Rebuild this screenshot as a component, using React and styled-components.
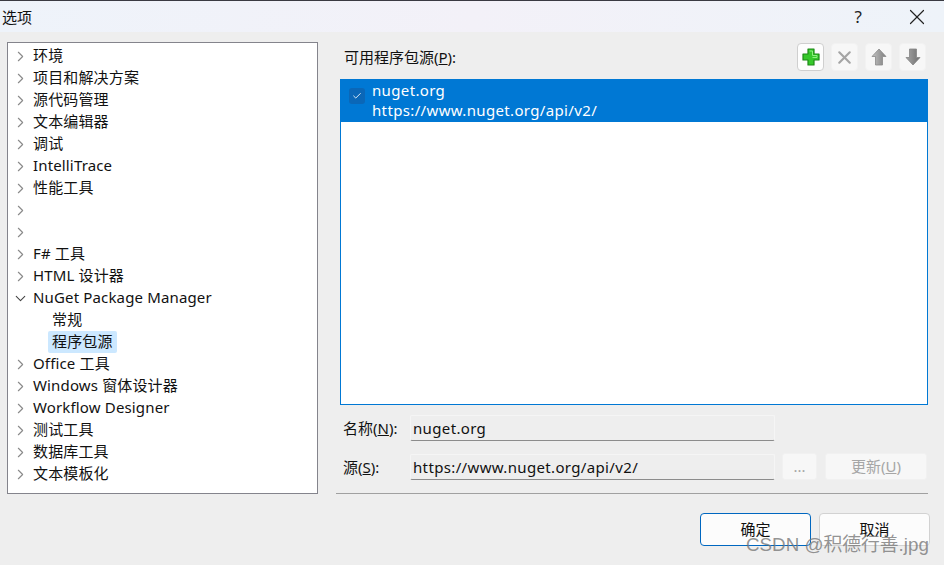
import React from "react";
import styled, { createGlobalStyle } from "styled-components";
import { ChevronRight, ChevronDown, X, Check } from "lucide-react";

const Global = createGlobalStyle`
  html, body { margin: 0; padding: 0; background: #eeeeee; }
  body { font-family: "Noto Sans", "Noto Sans CJK SC", sans-serif; }
`;

const treeItems = [
  { label: "环境" },
  { label: "项目和解决方案" },
  { label: "源代码管理" },
  { label: "文本编辑器" },
  { label: "调试" },
  { label: "IntelliTrace" },
  { label: "性能工具" },
  { label: "" },
  { label: "" },
  { label: "F# 工具" },
  { label: "HTML 设计器" },
  { label: "NuGet Package Manager", open: true },
  { label: "常规", child: true },
  { label: "程序包源", child: true, selected: true },
  { label: "Office 工具" },
  { label: "Windows 窗体设计器" },
  { label: "Workflow Designer" },
  { label: "测试工具" },
  { label: "数据库工具" },
  { label: "文本模板化" },
];

const App = () => (
  <Dialog>
    <Global />
    <TitleBar>
      <Title>选项</Title>
      <TitleActions>
        <HelpMark>?</HelpMark>
        <X size={26} strokeWidth={1.1} color="#222" />
      </TitleActions>
    </TitleBar>
    <Body>
      <Tree>
        {treeItems.map((item, idx) => (
          <TreeRow key={idx} $child={item.child}>
            {!item.child && (
              <Caret>
                {item.open ? (
                  <ChevronDown size={17} strokeWidth={1.5} color="#444" />
                ) : (
                  <ChevronRight size={17} strokeWidth={1.6} color="#8a8a8a" />
                )}
              </Caret>
            )}
            <TreeLabel $selected={item.selected}>{item.label}</TreeLabel>
          </TreeRow>
        ))}
      </Tree>
      <Panel>
        <PanelHead>
          <Label>可用程序包源(<u>P</u>):</Label>
          <Tools>
            <ToolButton $active>
              <svg width="20" height="20" viewBox="0 0 20 20">
                <path d="M7 2h6v5h5v6h-5v5H7v-5H2V7h5z" fill="#35c82a" stroke="#1d8a16" strokeWidth="1.2" strokeLinejoin="round" />
                <path d="M8.5 4h3v4.5H16v2h-4.5" fill="none" stroke="#8df07f" strokeWidth="1" />
              </svg>
            </ToolButton>
            <ToolButton>
              <X size={21} strokeWidth={2.4} color="#a4a4a4" />
            </ToolButton>
            <ToolButton>
              <svg width="18" height="20" viewBox="0 0 18 20">
                <defs>
                  <linearGradient id="up" x1="0" y1="0" x2="1" y2="0">
                    <stop offset="0" stopColor="#c4c4c4" />
                    <stop offset="1" stopColor="#7d7d7d" />
                  </linearGradient>
                </defs>
                <path d="M9 2l7 7.5h-3.5V18h-7V9.5H2z" fill="url(#up)" stroke="#8a8a8a" strokeWidth=".8" />
              </svg>
            </ToolButton>
            <ToolButton>
              <svg width="18" height="20" viewBox="0 0 18 20">
                <defs>
                  <linearGradient id="down" x1="0" y1="0" x2="1" y2="0">
                    <stop offset="0" stopColor="#a5a5a5" />
                    <stop offset="1" stopColor="#6f6f6f" />
                  </linearGradient>
                </defs>
                <path d="M5.5 2h7v8.5H16L9 18l-7-7.5h3.5z" fill="url(#down)" stroke="#858585" strokeWidth=".8" />
              </svg>
            </ToolButton>
          </Tools>
        </PanelHead>
        <SourceList>
          <SourceRow>
            <CheckBox>
              <Check size={10} strokeWidth={2} color="#fff" />
            </CheckBox>
            <SourceText>
              <div>nuget.org</div>
              <div>https://www.nuget.org/api/v2/</div>
            </SourceText>
          </SourceRow>
        </SourceList>
        <FormRow>
          <FieldLabel>名称(<u>N</u>):</FieldLabel>
          <Field>nuget.org</Field>
        </FormRow>
        <FormRow $second>
          <FieldLabel>源(<u>S</u>):</FieldLabel>
          <Field>https://www.nuget.org/api/v2/</Field>
          <GhostButton $w={35}>...</GhostButton>
          <GhostButton $w={102}>更新(<u>U</u>)</GhostButton>
        </FormRow>
        <Divider />
      </Panel>
    </Body>
    <Footer>
      <DialogButton $primary>确定</DialogButton>
      <DialogButton>取消</DialogButton>
    </Footer>
    <Watermark>CSDN @积德行善.jpg</Watermark>
  </Dialog>
);

const Dialog = styled.div`
  position: relative;
  width: 944px;
  height: 565px;
  overflow: hidden;
  background: #eeeeee;
  color: #111;
  font-size: 15px;
`;

const TitleBar = styled.div`
  display: flex;
  align-items: center;
  justify-content: space-between;
  box-sizing: border-box;
  height: 32px;
  padding: 0 14px 0 2px;
  border-top: 1px solid #3a3a42;
  background: linear-gradient(90deg, #eef3fa 0%, #f3f1f8 50%, #eef3f9 100%);
`;

const Title = styled.div`
  font-size: 15px;
`;

const TitleActions = styled.div`
  display: flex;
  align-items: center;
  gap: 42px;
`;

const HelpMark = styled.span`
  font-size: 17px;
  color: #222;
`;

const Body = styled.div`
  display: flex;
  height: 461px;
  padding: 10px 0 0 7px;
  box-sizing: border-box;
  gap: 18px;
`;

const Tree = styled.div`
  box-sizing: border-box;
  width: 311px;
  height: 452px;
  padding-top: 2px;
  border: 1px solid #84848c;
  background: #fff;
  letter-spacing: 0.15px;
`;

const TreeRow = styled.div`
  display: flex;
  align-items: center;
  height: 22px;
  padding-left: ${(p) => (p.$child ? "40px" : "4px")};
`;

const Caret = styled.span`
  display: flex;
  width: 17px;
  flex: none;
`;

const TreeLabel = styled.span`
  padding: 0 4px;
  height: 22px;
  line-height: 20px;
  border-radius: 2px;
  white-space: nowrap;
  background: ${(p) => (p.$selected ? "#cce8ff" : "transparent")};
`;

const Panel = styled.div`
  width: 592px;
`;

const PanelHead = styled.div`
  display: flex;
  align-items: flex-start;
  justify-content: space-between;
  height: 37px;
  padding: 0 2px 0 8px;
`;

const Label = styled.span`
  font-size: 15px;
  margin-top: 4px;
`;

const Tools = styled.div`
  display: flex;
  gap: 7px;
  margin-top: 1px;
`;

const ToolButton = styled.div`
  display: flex;
  align-items: center;
  justify-content: center;
  box-sizing: border-box;
  width: 27px;
  height: 28px;
  border-radius: 4px;
  background: ${(p) => (p.$active ? "#fdfdfd" : "#f7f7f7")};
  border: 1px solid ${(p) => (p.$active ? "#cfcfcf" : "#f2f2f2")};
`;

const SourceList = styled.div`
  box-sizing: border-box;
  width: 588px;
  height: 326px;
  margin-left: 4px;
  border: 1px solid #0078d4;
  background: #fff;
`;

const SourceRow = styled.div`
  display: flex;
  align-items: flex-start;
  height: 42px;
  padding-left: 8px;
  background: #0078d4;
  color: #fff;
`;

const CheckBox = styled.span`
  display: flex;
  align-items: center;
  justify-content: center;
  width: 16px;
  height: 16px;
  margin: 8px 7px 0 0;
  border-radius: 3px;
  background: #0a67b8;
`;

const SourceText = styled.div`
  line-height: 20px;
  letter-spacing: 0.35px;
`;

const FormRow = styled.div`
  display: flex;
  align-items: center;
  height: 28px;
  margin-top: ${(p) => (p.$second ? "11px" : "8px")};
`;

const FieldLabel = styled.span`
  width: 74px;
  padding-left: 7px;
  box-sizing: border-box;
  flex: none;
`;

const Field = styled.div`
  box-sizing: border-box;
  width: 365px;
  height: 26px;
  line-height: 24px;
  padding-left: 2px;
  letter-spacing: 0.35px;
  background: #eeeeee;
  border: 1px solid #f5f5f5;
  border-bottom: 1px solid #8c8c8c;
  margin-top: 1px;
  border-radius: 2px;
`;

const GhostButton = styled.div`
  box-sizing: border-box;
  flex: none;
  width: ${(p) => p.$w}px;
  height: 27px;
  margin-left: ${(p) => (p.$w > 50 ? "8px" : "7px")};
  text-align: center;
  line-height: 25px;
  border-radius: 3px;
  background: #f7f7f7;
  border: 1px solid #f1f1f1;
  color: #a6a6a6;
`;

const Divider = styled.div`
  height: 1px;
  margin-top: 13px;
  background: #a0a0a0;
`;

const Footer = styled.div`
  display: flex;
  justify-content: flex-end;
  gap: 8px;
  padding: 20px 14px 0 0;
`;

const DialogButton = styled.div`
  box-sizing: border-box;
  width: 111px;
  height: 33px;
  text-align: center;
  line-height: 30px;
  border-radius: 4px;
  background: #fcfcfc;
  border: 1px solid ${(p) => (p.$primary ? "#0067c0" : "#d2d2d2")};
`;

const Watermark = styled.div`
  position: absolute;
  left: 746px;
  top: 529px;
  font-size: 18.8px;
  white-space: nowrap;
  color: rgba(120, 120, 120, 0.8);
  font-family: "Liberation Sans", "Noto Sans CJK SC", sans-serif;
`;

export default App;
